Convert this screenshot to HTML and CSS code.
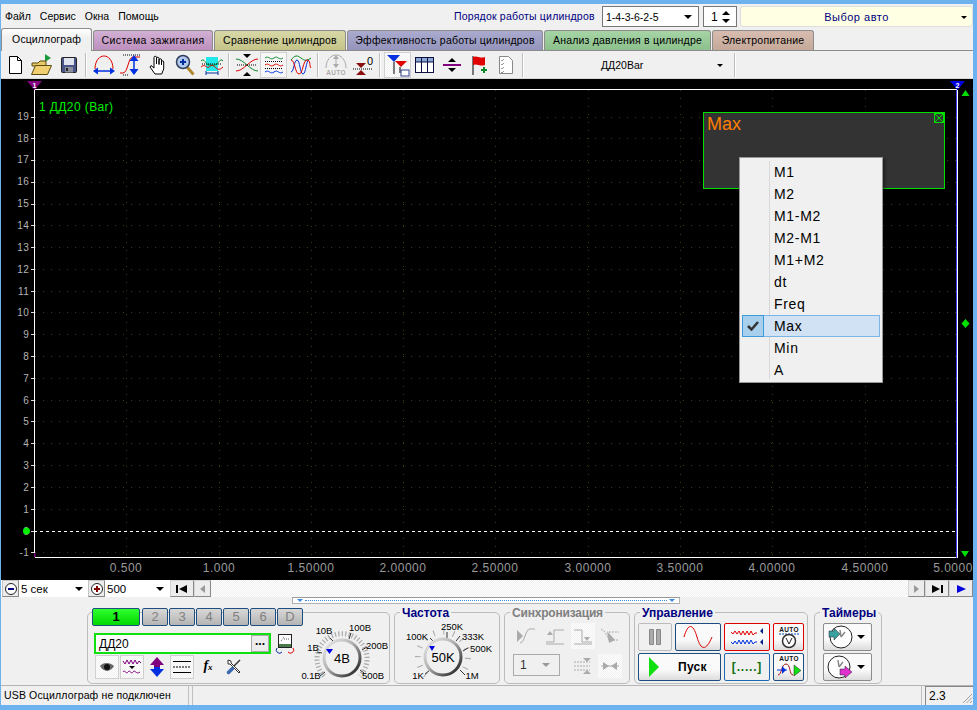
FILE: index.html
```html
<!DOCTYPE html>
<html lang="ru">
<head>
<meta charset="UTF-8" />
<title>Осциллограф</title>
<link rel="stylesheet" href="styles.css">
</head>
<body>

<svg class="defs" width="0" height="0">
  <defs>
    <linearGradient id="ring" x1="0" y1="0" x2="1" y2="1">
      <stop offset="0" stop-color="#ececec"/>
      <stop offset="0.45" stop-color="#b0b0b0"/>
      <stop offset="1" stop-color="#111"/>
    </linearGradient>
  </defs>
</svg>

<div class="window">

  <!-- menu row -->
  <div class="menubar">
    <div class="menu">
      <span>Файл</span><span>Сервис</span><span>Окна</span><span>Помощь</span>
    </div>
    <div class="order-label">Порядок работы цилиндров</div>
    <div class="combo order-combo"><span>1-4-3-6-2-5</span><i class="arrow"></i></div>
    <div class="combo spin"><span>1</span>
      <div class="spin-arrows"><i class="arrow up"></i><i class="arrow"></i></div>
    </div>
    <div class="car-combo"><span>Выбор авто</span><i class="arrow small"></i></div>
  </div>

  <!-- tabs -->
  <div class="tabs">
    <div class="tab active">Осциллограф</div>
    <div class="tab purple">Система зажигания</div>
    <div class="tab olive">Сравнение цилиндров</div>
    <div class="tab violet">Эффективность работы цилиндров</div>
    <div class="tab green">Анализ давления в цилиндре</div>
    <div class="tab brown">Электропитание</div>
  </div>

  <!-- toolbar -->
  <div class="toolbar">
    <div class="tool"><svg width="16" height="20" viewBox="0 0 16 20"><path d="M2.500 1.500h8l4 4v13h-12z" fill="#fff" stroke="#000"/><path d="M10.500 1.500v4h4" fill="none" stroke="#000"/></svg></div>
    <div class="tool"><svg width="24" height="24" viewBox="0 0 24 24"><path d="M15 1v8l6-4z" fill="#1c9a3c"/><path d="M2 10h6l2-2h6v5H2z" fill="#e8c860" stroke="#5a4a10"/><path d="M1.500 21.500l4-9h16l-4 9z" fill="#f0d070" stroke="#5a4a10"/></svg></div>
    <div class="tool"><svg width="16" height="16" viewBox="0 0 16 16"><rect x="0.500" y="0.500" width="15" height="15" rx="1" fill="#4a5488" stroke="#222"/><rect x="3" y="1" width="10" height="7" fill="#dfe3ee"/><rect x="4" y="10" width="8" height="5.500" fill="#8c8f9c"/><rect x="5" y="11" width="2" height="3" fill="#222"/></svg></div>
    <i class="sep"></i>
    <div class="tool"><svg width="24" height="22" viewBox="0 0 24 22"><path d="M3 15C3 6 8 2 12 2s9 4 9 13" fill="none" stroke="#e00000"/><path d="M1 17l5-3.500v7zM23 17l-5-3.500v7z" fill="#0030e0"/><path d="M5 17h14" stroke="#0030e0" stroke-width="1.500"/></svg></div>
    <div class="tool"><svg width="24" height="24" viewBox="0 0 24 24"><path d="M1 20h3c5 0 5-16 10-16h7" fill="none" stroke="#e00000"/><path d="M4 2h17M4 22h6" stroke="#000" stroke-dasharray="1 1"/><path d="M15 2l-4.500 6h9zM15 22l-4.500-6h9z" fill="#0030e0"/><path d="M15 6v12" stroke="#0030e0" stroke-width="1.500"/></svg></div>
    <div class="tool"><svg width="18" height="20" viewBox="0 0 18 20"><path d="M6 19l-5-7 1-1.500 3 2.500V2.500a1.200 1.200 0 0 1 2.500 0V9V3.500a1.200 1.200 0 0 1 2.500 0V9.500V5a1.200 1.200 0 0 1 2.500 0V10V7a1.100 1.100 0 0 1 2.200 0V14l-2 5z" fill="#fff" stroke="#000"/></svg></div>
    <div class="tool"><svg width="20" height="22" viewBox="0 0 20 22"><path d="M12 13l6.500 7.500" stroke="#b08830" stroke-width="3"/><circle cx="8" cy="8" r="6.500" fill="#b4c8ee" stroke="#30405c" stroke-width="1.500"/><path d="M5 8h6M8 5v6" stroke="#0030a0" stroke-width="2"/></svg></div>
    <div class="tool"><svg width="24" height="22" viewBox="0 0 24 22"><rect x="6" y="3" width="12" height="14" fill="#20e8e8"/><path d="M1 7c3-4 5 4 8 4h6c3 0 5-8 8-4" fill="none" stroke="#0a8a2a"/><path d="M1 13c4-4 6 2 8 0s4-2 6 0 4 4 8 0" fill="none" stroke="#e00000"/><path d="M2 10h20" stroke="#000" stroke-dasharray="1 1"/><path d="M6 19h12M6 17v4M18 17v4" stroke="#0030a0"/></svg></div>
    <i class="sep"></i>
    <div class="tool"><svg width="24" height="22" viewBox="0 0 24 22"><path d="M1 5c8 0 14 12 22 12" fill="none" stroke="#0a8a2a"/><path d="M1 17c8 0 14-12 22-12" fill="none" stroke="#e00000"/><path d="M2 11h20" stroke="#000" stroke-dasharray="1 1"/><path d="M8 0h8l-4 4zM8 22h8l-4-4z" fill="#000"/></svg></div>
    <div class="tool pressed"><svg width="24" height="22" viewBox="0 0 24 22"><path d="M3 4c4-3 5 3 9 0s5 3 9 0" fill="none" stroke="#0a8a2a"/><path d="M3 11c4-3 5 3 9 0s5 3 9 0" fill="none" stroke="#e00000"/><path d="M3 18c4-3 5 3 9 0s5 3 9 0" fill="none" stroke="#0030e0"/><path d="M3 7.500h18M3 14.500h18" stroke="#000" stroke-dasharray="1 1"/></svg></div>
    <div class="tool"><svg width="24" height="22" viewBox="0 0 24 22"><path d="M2 6c4-5 6-5 10-2s6 3 10 0" fill="none" stroke="#0a8a2a"/><path d="M2 18c3 0 3-12 6-12s3 14 6 14 3-14 6-14" fill="none" stroke="#0030e0"/><path d="M2 6c4 0 4 14 8 14s4-14 8-14 2 6 4 8" fill="none" stroke="#e00000"/></svg></div>
    <i class="sep"></i>
    <div class="tool"><svg width="24" height="24" viewBox="0 0 24 24"><path d="M2 15C2 7 7 2 12 2s10 5 10 13" fill="none" stroke="#aaa"/><path d="M12 2l-3 4h6zM12 15l-3-4h6z" fill="#aaa"/><path d="M12 5v8" stroke="#aaa"/><text x="12" y="22" class="mini-label">AUTO</text></svg></div>
    <div class="tool"><svg width="24" height="22" viewBox="0 0 24 22"><path d="M5 9h10l-5 5zM5 21h10l-5-5z" fill="#8a1010"/><path d="M2 15h20" stroke="#000" stroke-dasharray="1 1"/><text x="19" y="11" class="zero-label">0</text></svg></div>
    <i class="sep"></i>
    <div class="tool pressed"><svg width="24" height="24" viewBox="0 0 24 24"><path d="M1 2h13L8 9z" fill="#0030e0"/><path d="M9 8h12l-6 6z" fill="#e00000"/><path d="M8 9v12M14 14v6" stroke="#000"/><rect x="15" y="17" width="8" height="6" fill="#fff" stroke="#30408c"/></svg></div>
    <div class="tool"><svg width="20" height="16" viewBox="0 0 20 16"><rect x="0.500" y="0.500" width="18" height="15" fill="#fff" stroke="#101040"/><rect x="1" y="1" width="17" height="4" fill="#8aa8d8"/><path d="M1 5h17M6.500 1v14M12.500 1v14" stroke="#101040"/></svg></div>
    <div class="tool"><svg width="20" height="16" viewBox="0 0 20 16"><path d="M6 5h8l-4-4zM6 11h8l-4 4z" fill="#000"/><path d="M1 8h18" stroke="#800080" stroke-width="2"/></svg></div>
    <div class="tool"><svg width="16" height="22" viewBox="0 0 16 22"><path d="M2 2v19" stroke="#000"/><path d="M2 3c4-2 7 2 12 0v8c-5 2-8-2-12 0z" fill="#e00000"/><path d="M10 16h6M13 13v6" stroke="#0a8a2a" stroke-width="2"/></svg></div>
    <div class="tool"><svg width="16" height="20" viewBox="0 0 16 20"><path d="M1.500 1.500h9l4 4v13h-13z" fill="#fff" stroke="#888"/><path d="M3 5l1 1 2-2M3 9l1 1 2-2M3 13l1 1 2-2M3 17l1 1 2-2" fill="none" stroke="#999"/></svg></div>
    <i class="sep"></i>
    <div class="measure-combo"><span>ДД20Bar</span><i class="arrow small"></i></div>
    <i class="sep"></i>
  </div>

  <!-- scope canvas -->
  <div class="scope">
    <svg class="plot" width="972" height="501" viewBox="1 79 972 501">
      <path class="grid" d="M35 117H957M35 138H957M35 160H957M35 182H957M35 204H957M35 225H957M35 247H957M35 269H957M35 291H957M35 312H957M35 334H957M35 356H957M35 378H957M35 400H957M35 421H957M35 443H957M35 465H957M35 487H957M35 509H957M35 552H957"/>
      <path class="grid" d="M126.500 90V556M219.500 90V556M311.500 90V556M403.500 90V556M495.500 90V556M588.500 90V556M680.500 90V556M772.500 90V556M865.500 90V556"/>
      <path class="frame" d="M34.500 557V89.500H957M34.500 557.500H957"/>
      <path class="frame-end" d="M956.500 90V558"/>
      <path class="frame" d="M957.500 90V558"/>
      <path class="ticks" d="M31 117h3M31 138h3M31 160h3M31 182h3M31 204h3M31 225h3M31 247h3M31 269h3M31 291h3M31 312h3M31 334h3M31 356h3M31 378h3M31 400h3M31 421h3M31 443h3M31 465h3M31 487h3M31 509h3M31 531h3M31 552h3"/>
      <path class="zero-line" d="M34 531.500H957"/>

      <g class="y-labels">
        <text x="29" y="120">19</text><text x="29" y="142">18</text><text x="29" y="163">17</text>
        <text x="29" y="185">16</text><text x="29" y="207">15</text><text x="29" y="229">14</text>
        <text x="29" y="251">13</text><text x="29" y="273">12</text><text x="29" y="295">11</text>
        <text x="29" y="316">10</text><text x="29" y="338">9</text><text x="29" y="360">8</text>
        <text x="29" y="382">7</text><text x="29" y="404">6</text><text x="29" y="425">5</text>
        <text x="29" y="447">4</text><text x="29" y="469">3</text><text x="29" y="491">2</text>
        <text x="29" y="513">1</text><text x="29" y="535">0</text><text x="29" y="556">-1</text>
      </g>
      <g class="x-labels">
        <text x="126" y="572">0.500</text><text x="219" y="572">1.000</text><text x="311" y="572">1.50000</text>
        <text x="403" y="572">2.00000</text><text x="495" y="572">2.50000</text><text x="588" y="572">3.00000</text>
        <text x="680" y="572">3.50000</text><text x="772" y="572">4.00000</text><text x="865" y="572">4.50000</text>
        <text x="953" y="572">5.0000</text>
      </g>
      <text x="39" y="111" class="channel-name">1 ДД20 (Bar)</text>

      <path d="M27 81h15l-7.500 9z" fill="#800080"/>
      <text x="34.500" y="87.500" class="cursor-num">1</text>
      <path d="M950 81h15l-7.500 9z" fill="#0000e0"/>
      <text x="957.500" y="87.500" class="cursor-num">2</text>
      <rect x="34" y="553" width="1.500" height="4" fill="#800080"/>

      <path d="M965.500 90l4 6h-8z" fill="#00e000"/>
      <path d="M965.500 319l4 4.500-4 4.500-4-4.500z" fill="#00e000"/>
      <path d="M961 551h8l-4 6z" fill="#00e000"/>
      <circle cx="26.500" cy="531" r="3.500" fill="#00f000"/>
    </svg>

    <div class="measure-box">
      <span>Max</span>
      <svg class="measure-close" width="10" height="10" viewBox="0 0 10 10"><path d="M.5.500h9v9h-9zM.5.500l9 9M9.500.500l-9 9" fill="none" stroke="#00e000"/></svg>
    </div>

    <div class="popup">
      <div class="popup-item">M1</div>
      <div class="popup-item">M2</div>
      <div class="popup-item">M1-M2</div>
      <div class="popup-item">M2-M1</div>
      <div class="popup-item">M1+M2</div>
      <div class="popup-item">dt</div>
      <div class="popup-item">Freq</div>
      <div class="popup-item checked">
        <div class="check"><svg width="12" height="10" viewBox="0 0 12 10"><path d="M1 5l3.500 3.500L11 1" fill="none" stroke="#333" stroke-width="2.500"/></svg></div>
        Max
      </div>
      <div class="popup-item">Min</div>
      <div class="popup-item">A</div>
    </div>
  </div>

  <!-- timebase + scroll row -->
  <div class="scrollrow">
    <div class="round-btn"><i class="zoom-sign minus"></i></div>
    <div class="time-combo first"><span>5 сек</span><i class="arrow"></i></div>
    <div class="round-btn"><i class="zoom-sign plus"></i></div>
    <div class="time-combo second"><span>500</span><i class="arrow"></i></div>
    <div class="nav-btn wide"><svg width="12" height="8" viewBox="0 0 12 8"><path d="M0 0h2v8H0zM11 0v8L3 4z" fill="#000"/></svg></div>
    <div class="nav-btn"><svg width="5" height="8" viewBox="0 0 5 8"><path d="M5 0v8L0 4z" fill="#999"/></svg></div>
    <div class="track"></div>
    <div class="nav-btn"><svg width="5" height="8" viewBox="0 0 5 8"><path d="M0 0v8l5-4z" fill="#999"/></svg></div>
    <div class="nav-btn wide"><svg width="12" height="8" viewBox="0 0 12 8"><path d="M1 0v8l8-4zM10 0h2v8h-2z" fill="#000"/></svg></div>
    <div class="nav-btn wide"><svg width="9" height="8" viewBox="0 0 9 8"><path d="M0 0v8l9-4z" fill="#0000e0"/></svg></div>
  </div>

  <div class="splitter"><i class="split-mark"></i><span class="split-dots"></span><i class="split-mark"></i></div>

  <!-- bottom control panel -->
  <div class="panel">

    <div class="group channel-group">
      <div class="channel-left">
        <div class="channels">
          <div class="ch-btn on">1</div>
          <div class="ch-btn">2</div>
          <div class="ch-btn">3</div>
          <div class="ch-btn">4</div>
          <div class="ch-btn">5</div>
          <div class="ch-btn">6</div>
          <div class="ch-btn">D</div>
        </div>
        <div class="sensor-row">
          <div class="sensor"><span>ДД20</span><div class="dots-btn">...</div></div>
          <svg width="20" height="20" viewBox="0 0 20 20"><rect x="3.500" y="0.500" width="13" height="13" fill="#fff" stroke="#222"/><path d="M6 7l3-4M9 5h5" stroke="#666" stroke-dasharray="1 1"/><rect x="4" y="10" width="12" height="3" fill="#4a7a4a"/><path d="M2 14a3 3 0 0 0 5 4" fill="none" stroke="#0030a0"/><path d="M18 14a3 3 0 0 1-5 4" fill="none" stroke="#e00000"/></svg>
        </div>
        <div class="channel-tools">
          <div class="tool small pressed"><svg width="14" height="10" viewBox="0 0 14 10"><path d="M0 4c3-4 10-4 14 0-3 6-10 7-14 0z" fill="#666"/><circle cx="7" cy="5" r="3" fill="#111"/></svg></div>
          <div class="tool small pressed"><svg width="20" height="18" viewBox="0 0 20 18"><path d="M1 3l2 3 2-4 2 4 2-4 2 4 2-4 2 4 2-3 2 2" fill="none" stroke="#800080"/><path d="M7 8h6l-3 3z" fill="#000"/><path d="M1 14c2-3 3 3 5 0s3 3 5 0 3 3 7 0" fill="none" stroke="#800080"/></svg></div>
          <div class="tool small"><svg width="16" height="20" viewBox="0 0 16 20"><path d="M8 0l7 8h-4v2H5V8H1z" fill="#800080"/><path d="M8 20l7-8h-4v-2H5v2H1z" fill="#0030e0"/></svg></div>
          <div class="tool small pressed"><svg width="20" height="14" viewBox="0 0 20 14"><path d="M1 1.500h18M1 12.500h18" stroke="#000"/><path d="M1 7h18" stroke="#000" stroke-dasharray="2 1"/></svg></div>
          <div class="fx-btn">f<sub>x</sub></div>
          <div class="tool small"><svg width="16" height="16" viewBox="0 0 16 16"><path d="M2 1l3 1v2l9 9-1 1-9-9H2z" fill="#fff" stroke="#333"/><path d="M14 1l-6 6" stroke="#333" stroke-width="1.500"/><path d="M6.500 9.500l-4 4" stroke="#3a6ab0" stroke-width="3.500" stroke-linecap="round"/></svg></div>
        </div>
      </div>
      <svg class="dial volt-dial" width="92" height="70" viewBox="0 0 92 70">
        <path class="dial-scale" d="M28 63A25 25 0 1 1 64 63"/>
        <path class="dial-major" d="M24 63l5-4M68 60l-4-3M21 39l5 1M34 25l4 4M55 20l-2 6M71 34l-5 3"/>
        <circle class="dial-ring" cx="46" cy="45" r="18"/>
        <path d="M30 36h7l-3.500 5z" fill="#0000e0"/>
        <text x="46" y="50" class="dial-value">4В</text>
        <text x="28" y="21" class="dial-text">10В</text>
        <text x="64" y="18" class="dial-text">100В</text>
        <text x="81" y="36" class="dial-text">200В</text>
        <text x="17" y="38" class="dial-text">1В</text>
        <text x="15" y="66" class="dial-text">0.1В</text>
        <text x="77" y="66" class="dial-text">500В</text>
      </svg>
    </div>

    <div class="group freq-group">
      <div class="group-title">Частота</div>
      <svg class="dial freq-dial" width="103" height="70" viewBox="0 0 103 70">
        <path class="dial-freq" d="M31 62A25 25 0 1 1 65 62"/>
        <path class="dial-major" d="M30 61l5-4M70 62l-5-5M35 25l3 3M52 19v6M65 23l-4 5M73 35l-5 3"/>
        <circle class="dial-ring" cx="48" cy="44" r="18"/>
        <path d="M34 33h6l-3 5z" fill="#0000e0"/>
        <text x="48" y="49" class="dial-value">50K</text>
        <text x="22" y="27" class="dial-text">100K</text>
        <text x="57" y="17" class="dial-text">250K</text>
        <text x="78" y="27" class="dial-text">333K</text>
        <text x="86" y="39" class="dial-text">500K</text>
        <text x="23" y="66" class="dial-text">1K</text>
        <text x="77" y="66" class="dial-text">1M</text>
      </svg>
    </div>

    <div class="group sync-group">
      <div class="group-title muted-title">Синхронизация</div>
      <div class="sync-grid">
        <div class="sync-icon"><svg width="20" height="18" viewBox="0 0 20 18"><path d="M4 16c5 0 5-14 10-14h5" fill="none" stroke="#aaa"/><path d="M1 3v12l6-6z" fill="#aaa"/></svg></div>
        <div class="sync-icon"><svg width="20" height="18" viewBox="0 0 20 18"><path d="M1 15h8V3h10M1 17h18" fill="none" stroke="#aaa"/><path d="M5 4l3 4H2z" fill="#aaa"/></svg></div>
        <div class="sync-icon pressed-off"><svg width="20" height="18" viewBox="0 0 20 18"><path d="M1 3h8v12h10M1 17h18" fill="none" stroke="#aaa"/><path d="M14 14l3-4h-6z" fill="#aaa"/></svg></div>
        <div class="sync-icon"><svg width="20" height="18" viewBox="0 0 20 18"><path d="M1 2l4 3 4 8h9M9 5h10" fill="none" stroke="#aaa" stroke-dasharray="2 1"/><path d="M7 4l8 9-6 3z" fill="#aaa"/></svg></div>
        <div class="sync-combo"><span>1</span><i class="arrow gray"></i></div>
        <div class="sync-icon"><svg width="20" height="18" viewBox="0 0 20 18"><path d="M1 5h16M1 9h16M1 13h16" stroke="#aaa" stroke-dasharray="2 1"/><path d="M10 1h8l-4 4zM10 17h8l-4-4z" fill="#aaa"/></svg></div>
        <div class="sync-icon pressed-off"><svg width="20" height="12" viewBox="0 0 20 12"><path d="M1 6h18" stroke="#aaa"/><path d="M3 2v8l6-4zM17 2v8l-6-4z" fill="#aaa"/></svg></div>
      </div>
    </div>

    <div class="group control-group">
      <div class="group-title">Управление</div>
      <div class="control-grid">
        <div class="ctl-btn pause"><svg width="12" height="16" viewBox="0 0 12 16"><path d="M.5.500h4v15h-4zM7.500.500h4v15h-4z" fill="#aaa" stroke="#888"/></svg></div>
        <div class="ctl-btn navy"><svg width="30" height="22" viewBox="0 0 30 22"><path d="M1 11C5-3 10-3 14 11s9 14 15 0" fill="none" stroke="#e00000"/></svg></div>
        <div class="ctl-btn alert"><svg width="34" height="22" viewBox="0 0 34 22"><path d="M1 6l2 2 2-3 2 3 2-3 2 4 2-4 2 4 2-4 2 4 2-4 2 4 2-2 2 0" fill="none" stroke="#e00000"/><path d="M1 16l2 2 2-3 2 3 2-4 2 4 2-4 2 4 2-4 2 4 2-4 2 4 2-2 2 0" fill="none" stroke="#0030e0"/><path d="M33 2v6l-3-3zM33 13v6l-3-3z" fill="#00208c"/></svg></div>
        <div class="ctl-btn alert"><svg width="24" height="24" viewBox="0 0 24 24"><text x="12" y="7" class="mini-label dark">AUTO</text><path d="M2 9h20" stroke="#0050c0" stroke-dasharray="2 1"/><circle cx="12" cy="16" r="6.500" fill="#fff" stroke="#333" stroke-width="1.500"/><path d="M9 13l3 6 3-6" fill="none" stroke="#222"/></svg></div>
        <div class="ctl-btn navy start">
          <svg width="10" height="20" viewBox="0 0 10 20"><path d="M0 0v20l10-10z" fill="#10e010"/></svg>
          <span>Пуск</span>
        </div>
        <div class="ctl-btn blue-line"><span class="brackets">[.....]</span></div>
        <div class="ctl-btn navy"><svg width="26" height="26" viewBox="0 0 26 26"><text x="13" y="7" class="mini-label dark">AUTO</text><path d="M2 21c4 0 3-11 8-11s3 11 7 11" fill="none" stroke="#a01010"/><path d="M1 16h10" stroke="#0030e0"/><path d="M6 12v8l4-4z" fill="#0030e0"/><path d="M18 11v11l7-5.500z" fill="#10e010" stroke="#222" stroke-width=".5"/></svg></div>
      </div>
    </div>

    <div class="group timer-group">
      <div class="group-title">Таймеры</div>
      <div class="timer-list">
        <div class="ctl-btn timer">
          <svg width="26" height="26" viewBox="0 0 26 26"><circle cx="14" cy="13" r="11" fill="#fff" stroke="#222"/><path d="M14 13l-1-7M14 13l4-5" stroke="#888" stroke-width="1.500"/><path d="M2 7h5V4l6 6-6 6v-3H2z" fill="#3aa0a0" stroke="#222" stroke-width=".5"/></svg>
          <i class="arrow"></i>
        </div>
        <div class="ctl-btn timer">
          <svg width="26" height="26" viewBox="0 0 26 26"><circle cx="12" cy="13" r="11" fill="#fff" stroke="#222"/><path d="M12 13l-1-7M12 13l4-5" stroke="#888" stroke-width="1.500"/><path d="M13 15h5v-3l7 6-7 6v-3h-5z" fill="#e030d0" stroke="#222" stroke-width=".5"/></svg>
          <i class="arrow"></i>
        </div>
      </div>
    </div>

  </div>

  <!-- status bar -->
  <div class="statusbar">
    <div class="status-cell first">USB Осциллограф не подключен</div>
    <div class="status-cell middle"></div>
    <div class="status-cell last">2.3
      <svg class="grip" width="11" height="11" viewBox="0 0 11 11"><path d="M10 1L1 10M10 4.500L4.500 10M10 8L8 10" stroke="#a0a0a0"/></svg>
    </div>
  </div>

</div>

</body>
</html>
```

FILE: styles.css
```css
* {
  box-sizing: border-box;
}
html, body {
  margin: 0;
  height: 100%;
  overflow: hidden;
}
body {
  background: #6cb2ee;
  font-family: "Liberation Sans", Arial, sans-serif;
  font-size: 10.5px;
  color: #000;
  padding: 4px 4px 5px 1px;
}
.defs {
  position: absolute;
}
i {
  display: block;
  font-style: normal;
}
.window {
  background: #f0f0f0;
  height: 701px;
  width: 972px;
  display: flex;
  flex-direction: column;
}

/* small triangles */
.arrow {
  width: 0;
  height: 0;
  border-left: 4px solid transparent;
  border-right: 4px solid transparent;
  border-top: 4px solid #000;
  flex: none;
}
.arrow.up {
  border-top: 0;
  border-bottom: 4px solid #000;
}
.arrow.small {
  border-left-width: 3px;
  border-right-width: 3px;
  border-top-width: 3px;
}
.arrow.gray {
  border-top-color: #999;
}

/* menu row */
.menubar {
  height: 24px;
  flex: none;
  display: flex;
  align-items: center;
  padding-left: 4px;
}
.menu {
  display: flex;
  gap: 9px;
  width: 449px;
}
.order-label {
  color: #000080;
  width: 148px;
  white-space: nowrap;
  letter-spacing: 0.2px;
}
.combo {
  height: 21px;
  background: #fff;
  border: 1px solid #767676;
  display: flex;
  align-items: center;
  padding: 0 6px 0 3px;
  margin-top: 1px;
}
.order-combo {
  width: 97px;
  justify-content: space-between;
}
.spin {
  width: 34px;
  margin-left: 4px;
  padding-left: 7px;
  justify-content: space-between;
  font-size: 12px;
}
.spin-arrows {
  display: flex;
  flex-direction: column;
  gap: 4px;
}
.car-combo {
  width: 233px;
  height: 21px;
  margin: 1px 0 0 3px;
  background: #ffffe3;
  border: 1px solid #ddd;
  border-radius: 3px;
  color: #000080;
  font-size: 11px;
  letter-spacing: 0.5px;
  display: flex;
  align-items: center;
  justify-content: center;
  position: relative;
}
.car-combo .arrow {
  position: absolute;
  right: 5px;
  top: 9px;
}

/* tabs */
.tabs {
  height: 23px;
  flex: none;
  display: flex;
  align-items: flex-end;
  gap: 1px;
  border-bottom: 1px solid #8c8c8c;
}
.tab {
  height: 20px;
  border: 1px solid #8c8c8c;
  border-bottom: 0;
  border-radius: 3px 3px 0 0;
  text-align: center;
  line-height: 19px;
  letter-spacing: 0.2px;
}
.tab.active {
  width: 91px;
  height: 23px;
  line-height: 20px;
  background: linear-gradient(#fff, #f0f0f0 40%);
  margin-bottom: -1px;
  letter-spacing: 0.1px;
}
.tab.purple { width: 120px; background: linear-gradient(#d2b0d4, #bd8fbd); letter-spacing: 0.45px; }
.tab.olive { width: 132px; background: linear-gradient(#d8d8a8, #c4c488); }
.tab.violet { width: 196px; background: linear-gradient(#ababd0, #9494bc); }
.tab.green { width: 167px; background: linear-gradient(#a6d4a6, #8cc08c); }
.tab.brown { width: 102px; background: linear-gradient(#d8bcb0, #c4a898); }

/* toolbar */
.toolbar {
  height: 28px;
  flex: none;
  display: flex;
  align-items: center;
  border-bottom: 1px solid #d8d8d8;
}
.tool {
  width: 27px;
  height: 26px;
  flex: none;
  display: flex;
  align-items: center;
  justify-content: center;
}
.tool.pressed {
  outline: 1px solid #d0d0d0;
  outline-offset: -1px;
  background: repeating-conic-gradient(#fff 0 25%, #f0f0f0 0 50%);
  background-size: 2px 2px;
}
.sep {
  width: 2px;
  height: 24px;
  margin: 0 3px;
  flex: none;
  background: #bdbdbd;
  border-right: 1px solid #fff;
}
.mini-label {
  font-size: 6.5px;
  font-weight: 700;
  text-anchor: middle;
  fill: #aaa;
  letter-spacing: 0.3px;
}
.mini-label.dark {
  fill: #111;
}
.zero-label {
  font-size: 11px;
  text-anchor: middle;
  fill: #000;
}
.measure-combo {
  width: 204px;
  height: 20px;
  line-height: 20px;
  padding-left: 74px;
  position: relative;
}
.measure-combo .arrow {
  position: absolute;
  right: 8px;
  top: 9px;
}

/* scope */
.scope {
  height: 501px;
  flex: none;
  background: #000;
  position: relative;
  overflow: hidden;
}
.plot {
  display: block;
}
.grid {
  fill: none;
  stroke: #3c3c14;
  stroke-dasharray: 1 7;
  shape-rendering: crispEdges;
}
.frame {
  fill: none;
  stroke: #fff;
  shape-rendering: crispEdges;
}
.frame-end {
  stroke: #3c3cff;
  shape-rendering: crispEdges;
}
.ticks {
  stroke: #ddd;
  shape-rendering: crispEdges;
}
.zero-line {
  stroke: #fff;
  stroke-dasharray: 3 3;
  shape-rendering: crispEdges;
}
.y-labels text {
  font-size: 10px;
  letter-spacing: 0.3px;
  fill: #b4b4b4;
  text-anchor: end;
}
.x-labels text {
  font-size: 12px;
  letter-spacing: 0.5px;
  fill: #9a9a9a;
  text-anchor: middle;
}
.channel-name {
  font-size: 12px;
  letter-spacing: 0.4px;
  fill: #00f000;
}
.cursor-num {
  font-size: 7px;
  font-weight: 700;
  fill: #fff;
  text-anchor: middle;
}
.measure-box {
  position: absolute;
  left: 702px;
  top: 33px;
  width: 242px;
  height: 77px;
  background: #333;
  border: 1px solid #00e000;
  color: #ff7f00;
  font-size: 18px;
  padding: 0 0 0 3px;
  line-height: 23px;
}
.measure-close {
  position: absolute;
  right: 0;
  top: 0;
}
.popup {
  position: absolute;
  left: 738px;
  top: 78px;
  width: 144px;
  height: 226px;
  background: #f0f0f0;
  border: 1px solid #979797;
  box-shadow: 2px 2px 3px rgba(0, 0, 0, 0.4);
  padding: 3px 2px;
}
.popup::before {
  content: "";
  position: absolute;
  left: 29px;
  top: 3px;
  bottom: 3px;
  width: 1px;
  background: #d8d8d8;
}
.popup-item {
  height: 22px;
  line-height: 22px;
  padding-left: 32px;
  font-size: 14px;
  letter-spacing: 0.7px;
  position: relative;
}
.popup-item.checked {
  background: #d0e2f3;
  border: 1px solid #7db4e6;
  padding-left: 31px;
  line-height: 20px;
}
.check {
  position: absolute;
  left: -1px;
  top: -1px;
  width: 22px;
  height: 22px;
  background: #a8d0ec;
  border: 1px solid #3c9ad8;
  display: flex;
  align-items: center;
  justify-content: center;
}

/* timebase + scroll row */
.scrollrow {
  height: 17px;
  flex: none;
  display: flex;
  align-items: stretch;
  padding-left: 1px;
  background: #fff;
}
.round-btn {
  width: 17px;
  flex: none;
  background: #ececec;
  border: 1px solid #c4c4c4;
  border-right-color: #888;
  border-bottom-color: #888;
  display: flex;
  align-items: center;
  justify-content: center;
}
.zoom-sign {
  width: 12px;
  height: 12px;
  border: 1px solid #222;
  border-radius: 50%;
  background: #fff;
  position: relative;
}
.zoom-sign::before {
  content: "";
  position: absolute;
  left: 2px;
  top: 4px;
  width: 6px;
  height: 2px;
  background: #000080;
}
.zoom-sign.plus::before {
  background: #800000;
}
.zoom-sign.plus::after {
  content: "";
  position: absolute;
  left: 4px;
  top: 2px;
  width: 2px;
  height: 6px;
  background: #800000;
}
.time-combo {
  background: #fff;
  display: flex;
  align-items: center;
  justify-content: space-between;
  padding: 0 5px 0 2px;
  font-size: 11.5px;
  flex: none;
}
.time-combo.first { width: 69px; }
.time-combo.second { width: 64px; margin-right: 1px; }
.nav-btn {
  width: 17px;
  flex: none;
  background: #ececec;
  border: 1px solid #d4d4d4;
  border-right-color: #888;
  border-bottom-color: #888;
  display: flex;
  align-items: center;
  justify-content: center;
}
.nav-btn.wide {
  width: 24px;
}
.track {
  flex: 1;
  background: repeating-conic-gradient(#fff 0 25%, #f0f0f0 0 50%);
  background-size: 2px 2px;
}

.splitter {
  height: 7px;
  flex: none;
  width: 388px;
  margin-left: 291px;
  background: #fff;
  border: 1px solid #b0b0b0;
  border-top-color: #9a9a9a;
  display: flex;
  align-items: center;
  padding: 0 4px;
  gap: 2px;
}
.split-mark {
  width: 0;
  height: 0;
  border-left: 3px solid transparent;
  border-right: 3px solid transparent;
  border-top: 3px solid #3c8ae0;
}
.split-dots {
  flex: 1;
  border-top: 1px dotted #3c8ae0;
}

/* bottom panel */
.panel {
  height: 72px;
  flex: none;
  margin-top: 8px;
  padding-left: 86px;
  display: flex;
  align-items: stretch;
  gap: 4px;
}
.group {
  border: 1px solid #bcbcbc;
  border-radius: 5px;
  flex: none;
}
.group-title {
  width: fit-content;
  margin: -6px 0 0 5px;
  padding: 0 2px;
  height: 12px;
  line-height: 12px;
  background: #f0f0f0;
  color: #000080;
  font-weight: 700;
  font-size: 12px;
  white-space: nowrap;
}
.muted-title {
  color: #808080;
  letter-spacing: -0.2px;
}
.channel-group {
  width: 303px;
  display: flex;
}
.channel-left {
  width: 204px;
  flex: none;
  margin: -5px 0 0 4px;
}
.channels {
  display: flex;
  gap: 1px;
}
.ch-btn {
  width: 26px;
  height: 18px;
  flex: none;
  background: linear-gradient(#d8d8d8, #b4b4b4);
  border: 1px solid #1e4e80;
  border-radius: 2px;
  color: #808080;
  text-align: center;
  line-height: 16px;
  font-size: 13px;
}
.ch-btn.on {
  width: 48px;
  margin-right: 1px;
  background: linear-gradient(#30ff30, #00d800);
  color: #000;
  font-weight: 700;
}
.sensor-row {
  display: flex;
  align-items: center;
  gap: 4px;
  margin: 7px 0 0 2px;
}
.sensor {
  width: 177px;
  height: 21px;
  flex: none;
  background: #fff;
  border: 2px solid #10e010;
  display: flex;
  align-items: center;
  justify-content: space-between;
  padding-left: 3px;
  font-size: 12px;
}
.dots-btn {
  width: 18px;
  height: 17px;
  background: #ececec;
  border: 1px solid #aaa;
  text-align: center;
  font-weight: 700;
  line-height: 11px;
}
.channel-tools {
  display: flex;
  gap: 1px;
  margin: 1px 0 0 3px;
}
.tool.small {
  width: 24px;
  height: 24px;
}
.fx-btn {
  width: 26px;
  flex: none;
  text-align: center;
  font-family: "Liberation Serif", serif;
  font-style: italic;
  font-weight: 700;
  font-size: 14px;
  line-height: 22px;
}
.fx-btn sub {
  font-size: 9px;
  vertical-align: baseline;
}
.dial {
  display: block;
  flex: none;
}
.volt-dial {
  margin-left: auto;
  margin-right: 3px;
}
.dial-scale {
  fill: none;
  stroke: #aaa;
  stroke-width: 5;
  stroke-dasharray: 1.2 2.2;
}
.dial-freq {
  fill: none;
  stroke: #aaa;
  stroke-width: 6;
  stroke-dasharray: 1 9;
}
.dial-major {
  fill: none;
  stroke: #333;
}
.dial-ring {
  fill: #f0f0f0;
  stroke: url(#ring);
  stroke-width: 3;
}
.dial-value {
  font-size: 13px;
  text-anchor: middle;
}
.dial-text {
  font-size: 9.5px;
  letter-spacing: -0.1px;
  text-anchor: middle;
}
.freq-group {
  width: 106px;
}
.freq-group .dial {
  margin-top: -6px;
}
.sync-group {
  width: 126px;
}
.sync-grid {
  display: grid;
  grid-template-columns: 26px 26px 24px 24px;
  grid-template-rows: 26px 24px;
  gap: 5px 3px;
  padding: 4px 0 0 8px;
}
.sync-icon {
  display: flex;
  align-items: center;
  justify-content: center;
}
.sync-icon.pressed-off {
  background: repeating-conic-gradient(#fff 0 25%, #f0f0f0 0 50%);
  background-size: 2px 2px;
}
.sync-combo {
  grid-column: span 2;
  width: 47px;
  height: 22px;
  border: 1px solid #aaa;
  display: flex;
  align-items: center;
  justify-content: space-between;
  padding: 0 9px 0 6px;
  font-size: 12px;
  color: #333;
}
.control-group {
  width: 174px;
}
.control-grid {
  display: grid;
  grid-template-columns: 34px 46px 46px 31px;
  grid-template-rows: 28px 28px;
  gap: 2px 3px;
  padding-left: 3px;
  margin-top: 4px;
}
.ctl-btn {
  background: linear-gradient(#fafafa 60%, #dcdcdc);
  border: 1px solid #1e4e80;
  border-radius: 2px;
  display: flex;
  align-items: center;
  justify-content: center;
}
.ctl-btn.pause {
  border-color: #bcbcbc;
  background: #f0f0f0;
}
.ctl-btn.alert {
  border-color: #e00000;
}
.ctl-btn.blue-line {
  border-color: #1e6ab0;
  background: #f0f0f0;
}
.brackets {
  font-size: 12px;
  font-weight: 700;
  color: #107010;
  letter-spacing: 0.8px;
}
.ctl-btn.start {
  grid-column: span 2;
  justify-content: flex-start;
  padding-left: 10px;
  gap: 19px;
  font-size: 12px;
  font-weight: 700;
  letter-spacing: 0.3px;
}
.timer-group {
  width: 68px;
  margin-left: 2px;
}
.timer-list {
  display: flex;
  flex-direction: column;
  gap: 2px;
  padding-left: 8px;
  margin-top: 4px;
}
.ctl-btn.timer {
  width: 49px;
  height: 28px;
  border-color: #8c8c8c;
  justify-content: flex-start;
  padding-left: 3px;
  gap: 4px;
}

/* status bar */
.statusbar {
  height: 20px;
  flex: none;
  margin-top: 1px;
  border-top: 1px solid #b4b4b4;
  display: flex;
  gap: 3px;
}
.status-cell {
  line-height: 18px;
  padding-left: 3px;
  border-right: 1px solid #c0c0c0;
}
.status-cell.first {
  width: 188px;
  letter-spacing: 0.15px;
}
.status-cell.middle {
  flex: 1;
  border-left: 1px solid #c0c0c0;
}
.status-cell.last {
  width: 48px;
  border-left: 1px solid #888;
  border-top: 1px solid #888;
  border-right: 0;
  font-size: 12px;
  position: relative;
}
.grip {
  position: absolute;
  right: 0;
  bottom: 1px;
}
```
